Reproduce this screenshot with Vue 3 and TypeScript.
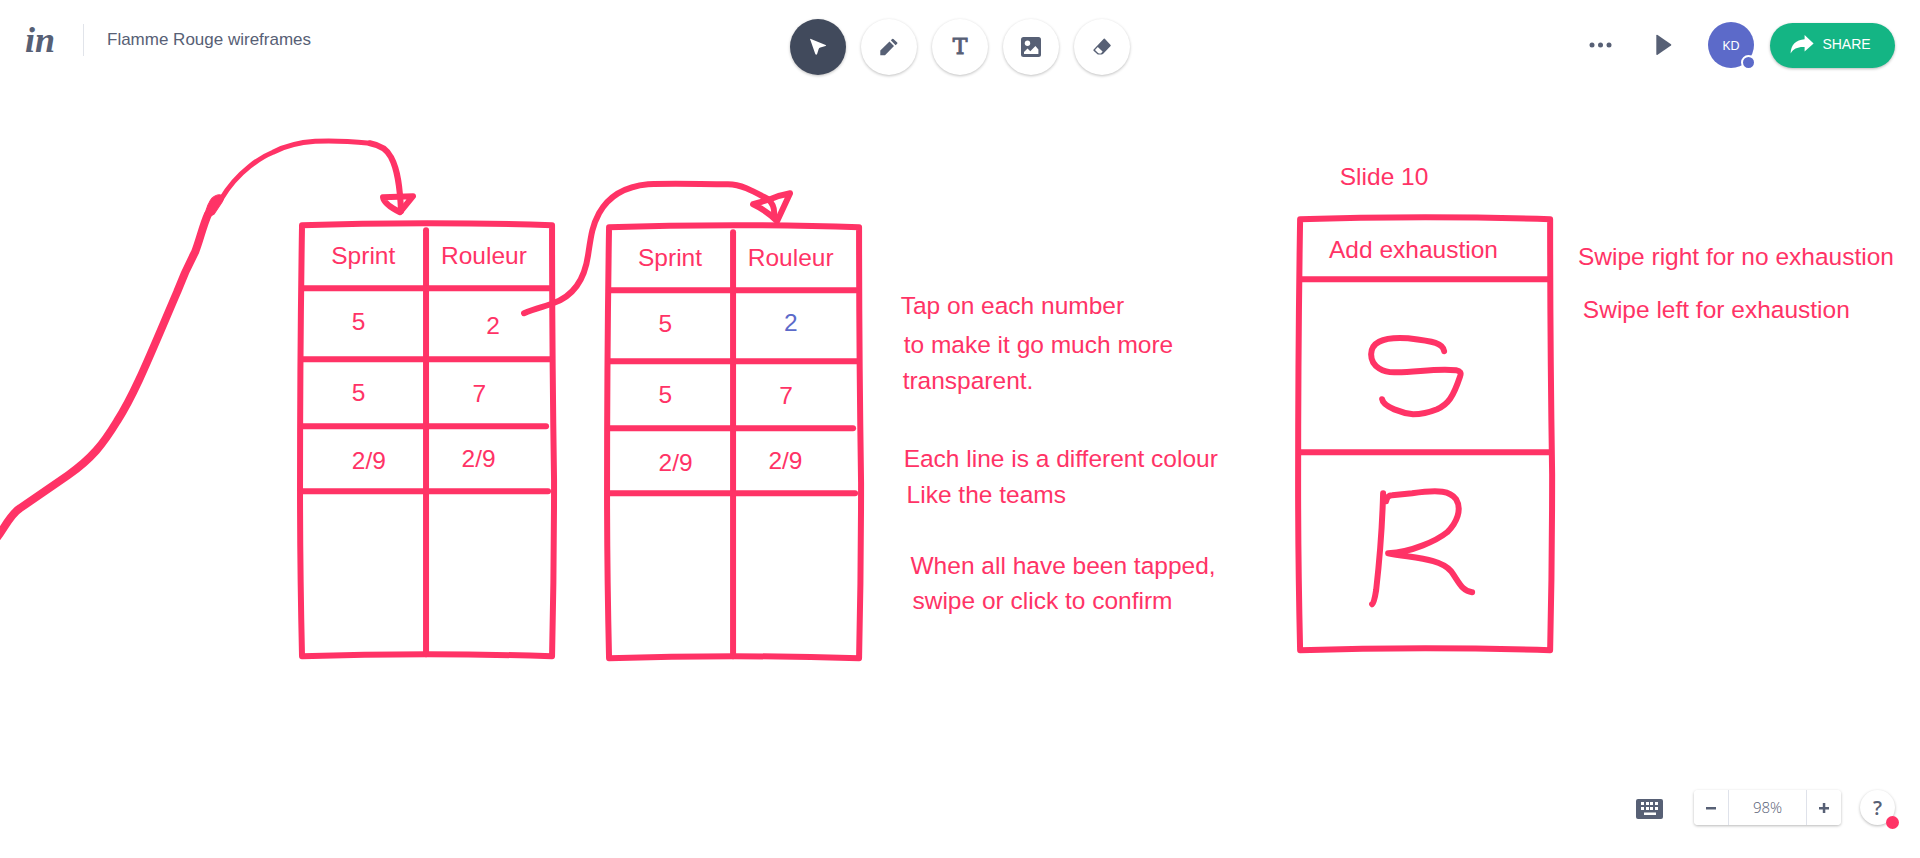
<script setup lang="ts">
import { ref } from 'vue'

interface Note {
  text: string
  x: number
  y: number
  accent?: boolean
}

interface Sketch {
  id: string
  ink: string
  dx: number
  dy: number
  lines: string[]
}

type Tool = 'select' | 'draw' | 'text' | 'image' | 'erase'

const documentName = 'Flamme Rouge wireframes'
const activeTool = ref<Tool>('select')
const zoom = ref(98)

const tools: { id: Tool; label: string }[] = [
  { id: 'select', label: 'Select' },
  { id: 'draw', label: 'Draw' },
  { id: 'text', label: 'Text' },
  { id: 'image', label: 'Image' },
  { id: 'erase', label: 'Erase' },
]

const frame =
  'M302 225 Q360 223 427 223 T552 225 Q552 350 554 480 Q554 570 552 656 Q490 654 427 654 T302 656 Q300 570 300 490 Q300 350 302 225 Z'

const gridLines = ['M426 230 V654', 'M302 288 H549', 'M302 359 H550', 'M302 426 H546', 'M302 491 H548']

const sketches: Sketch[] = [
  { id: 'first', ink: frame, dx: 0, dy: 0, lines: gridLines },
  { id: 'second', ink: frame, dx: 307, dy: 2, lines: gridLines },
  { id: 'slide', ink: frame, dx: 998, dy: -6, lines: ['M303 285 H551', 'M302 458 H551'] },
]

const cells = (dx: number, dy: number, tapped: boolean): Note[] => [
  { text: 'Sprint', x: 338 + dx, y: 269 + dy },
  { text: 'Rouleur', x: 450 + dx, y: 269 + dy },
  { text: '5', x: 359 + dx, y: 337 + dy },
  tapped ? { text: '2', x: 487 + dx, y: 336 + dy, accent: true } : { text: '2', x: 496 + dx, y: 341 + dy },
  { text: '5', x: 359 + dx, y: 409 + dy },
  { text: '7', x: 482 + dx, y: 410 + dy },
  { text: '2/9', x: 359 + dx, y: 478 + dy },
  { text: '2/9', x: 471 + dx, y: 476 + dy },
]

const notes: Note[] = [
  ...cells(0, 0, false),
  ...cells(313, 2, true),
  { text: 'Tap on each number', x: 919, y: 320 },
  { text: 'to make it go much more', x: 922, y: 360 },
  { text: 'transparent.', x: 921, y: 397 },
  { text: 'Each line is a different colour', x: 922, y: 476 },
  { text: 'Like the teams', x: 925, y: 513 },
  { text: 'When all have been tapped,', x: 929, y: 585 },
  { text: 'swipe or click to confirm', x: 931, y: 621 },
  { text: 'Slide 10', x: 1367, y: 189 },
  { text: 'Add exhaustion', x: 1356, y: 263 },
  { text: 'Swipe right for no exhaustion', x: 1610, y: 270 },
  { text: 'Swipe left for exhaustion', x: 1615, y: 324 },
]
</script>

<template>
  <div class="app">
    <svg class="canvas" viewBox="0 0 1959 875" role="img" aria-label="Whiteboard">
      <g class="ink" transform="scale(1.0204)">
        <path
          class="heavy"
          d="M-5 540 C4 529 10 514 20 508 L68 475 C92 458 103 444 117 421 C135 393 150 355 177 292 Q185 271 195 252 C200 239 203 225 208 214"
        />
        <path class="blob" d="M204 217 Q208 202 212 198 Q217 193 222 195 Q225 197 222 202 L214 214 Q209 218 204 217 Z" />
        <path class="light" d="M221 199 C238 170 263 156 273 152 C298 139 328 139 370 143" />
        <path d="M370 143 C381 145 387 149 391 157 C398 170 400 188 401 211" />
        <path d="M383 197 L413 196 L400 212 Q384 204 383 197 Z" />

        <path
          d="M524 313 C535 308 546 306 553 303 C576 295 585 276 588 255 C591 235 592 226 599 213 C609 195 627 186 648 184 C675 183 700 184 728 184 C742 184 755 192 768 199 Q775 205 774 215"
        />
        <path d="M753 204 L770 199 Q779 195 790 193 L777 221 Q766 210 753 204 Z" />

        <g v-for="s in sketches" :key="s.id" :transform="`translate(${s.dx} ${s.dy})`">
          <path :d="s.ink" />
          <path v-for="line in s.lines" :key="line" :d="line" />
        </g>

        <path
          d="M1444 351 C1443 343 1434 341 1408 338 C1380 336 1371 344 1371 354 C1371 367 1384 373 1397 372 C1417 372 1435 368 1456 370 Q1462 371 1460 376 C1453 397 1448 404 1437 409 C1427 413 1417 414 1413 414 C1403 413 1383 407 1382 399"
        />
        <path d="M1383 493 C1382 530 1380 555 1376 590 Q1374 603 1372 604" />
        <path
          d="M1386 501 Q1387 495 1392 495 L1412 493 C1440 489 1450 491 1456 499 C1462 509 1457 522 1447 532 C1437 540 1412 552 1388 553 C1414 558 1440 558 1451 571 C1459 582 1462 591 1472 592"
        />
      </g>
      <text
        v-for="(note, i) in notes"
        :key="i"
        :x="note.x"
        :y="note.y"
        :class="['note', { accent: note.accent }]"
      >{{ note.text }}</text>
    </svg>

    <header class="topbar">
      <div class="brand">
        <a class="logo" href="#" aria-label="Home">in</a>
        <h1 class="title">{{ documentName }}</h1>
      </div>

      <nav class="tools" aria-label="Tools">
        <button
          v-for="tool in tools"
          :key="tool.id"
          type="button"
          :class="['tool', { active: activeTool === tool.id }]"
          :aria-label="tool.label"
          :aria-pressed="activeTool === tool.id"
          @click="activeTool = tool.id"
        >
          <svg v-if="tool.id === 'select'" width="18" height="18" viewBox="0 0 18 18">
            <path d="M1.2 1.6 Q0.6 0.5 1.9 0.9 L16.6 6.9 Q17.8 7.6 16.5 8 L11.4 9.6 Q10 10 9.6 11.2 L8.2 15.8 Q7.2 17.6 6.2 15.8 Z" />
          </svg>
          <svg v-else-if="tool.id === 'draw'" width="18" height="18" viewBox="0 0 18 18">
            <path d="M0.3 12.4 L9.5 3.5 L14 8 L5 17.2 H0.3 Z M10.8 2.3 L12.2 0.9 Q12.8 0.4 13.4 0.9 L17.2 4.6 Q17.7 5.2 17.2 5.8 L15.6 7.2 Z" />
          </svg>
          <span v-else-if="tool.id === 'text'" class="tee">T</span>
          <svg v-else-if="tool.id === 'image'" width="20" height="20" viewBox="0 0 20 20">
            <rect width="20" height="20" rx="2.5" />
            <path class="cut" d="M3 17 V15 L6.5 11.6 L9.3 14.2 L14.4 9 L17.4 12.6 V17 Z" />
            <circle class="cut" cx="6.5" cy="6.3" r="2.7" />
          </svg>
          <svg v-else width="18" height="18" viewBox="0 0 18 18">
            <path d="M10.8 0.8 Q11.3 0.4 11.8 0.8 L17.6 6.9 Q18 7.4 17.6 7.9 L10.2 15.8 Q9.4 16.6 8.6 16.6 H5.6 Q4.8 16.6 4.2 16 L0.6 12.7 Q0 12 0.6 11.4 Z" />
            <path class="cut" d="M2 12 L4.8 9 L9.6 13.4 L8.4 14.9 Q8 15.4 7.2 15.4 H6.2 Q5.4 15.4 4.8 14.8 Z" />
          </svg>
        </button>
      </nav>

      <div class="actions">
        <button type="button" class="plain" aria-label="More">
          <svg width="24" height="24" viewBox="0 0 24 24">
            <circle cx="4" cy="12" r="2.5" />
            <circle cx="12.5" cy="12" r="2.5" />
            <circle cx="21" cy="12" r="2.5" />
          </svg>
        </button>
        <button type="button" class="plain play" aria-label="Play">
          <svg width="16" height="22" viewBox="0 0 16 22">
            <path d="M0.3 1.6 Q0.4 0.4 1.6 1 L15 10.2 Q15.8 10.9 15 11.6 L1.6 20.8 Q0.4 21.4 0.3 20.2 Z" />
          </svg>
        </button>
        <button type="button" class="avatar">KD<span class="presence"></span></button>
        <button type="button" class="share">
          <svg width="24" height="20" viewBox="0 0 24 20">
            <path d="M14.6 1 L23.6 9.4 L14.6 17.6 V13 C8 12.6 3.4 14.6 0.6 19.4 C0.8 11 6 5.6 14.6 5.2 Z" />
          </svg>
          SHARE
        </button>
      </div>
    </header>

    <footer class="bottombar">
      <button type="button" class="plain keys" aria-label="Keyboard shortcuts">
        <svg width="27" height="20" viewBox="0 0 27 20">
          <rect width="27" height="20" rx="2" />
          <path class="cut" d="M5 3h3v3h-3z M10 3h3v3h-3z M14 3h3v3h-3z M19 3h3v3h-3z M5 8h3v3h-3z M10 8h3v3h-3z M14 8h3v3h-3z M19 8h3v3h-3z M8 13.500h12v2.500h-12z" />
        </svg>
      </button>
      <div class="zoom">
        <button type="button" aria-label="Zoom out" @click="zoom -= 1">
          <svg width="10" height="10" viewBox="0 0 10 10"><path d="M0 4h10v2.500h-10z" /></svg>
        </button>
        <output class="level">{{ zoom }}%</output>
        <button type="button" aria-label="Zoom in" @click="zoom += 1">
          <svg width="10" height="10" viewBox="0 0 10 10"><path d="M0 4h3.800v-4h2.500v4h3.700v2.500h-3.700v3.500h-2.500v-3.500h-3.800z" /></svg>
        </button>
      </div>
      <button type="button" class="help" aria-label="Help">?<span class="alert"></span></button>
    </footer>
  </div>
</template>

<style>
body {
  margin: 0;
  background: #fff;
}
</style>

<style scoped>
.app {
  position: relative;
  display: flex;
  flex-direction: column;
  justify-content: space-between;
  min-height: 100vh;
  overflow: hidden;
  color: #576075;
  font-family: "Liberation Sans", Arial, sans-serif;
}

.canvas {
  position: absolute;
  inset: 0;
  width: 100%;
  height: 100%;
}

.ink {
  fill: none;
  stroke: #ff3366;
  stroke-width: 6;
  stroke-linecap: round;
  stroke-linejoin: round;
}

.ink .heavy {
  stroke-width: 8;
}

.ink .light {
  stroke-width: 5;
}

.ink .blob {
  fill: #ff3366;
  stroke-width: 1;
}

.note {
  fill: #ff3366;
  font-size: 25px;
}

.note.accent {
  fill: #5c6ac9;
}

.topbar {
  position: relative;
  display: grid;
  grid-template-columns: 1fr auto 1fr;
  align-items: start;
  padding: 19px 25px;
}

button {
  display: flex;
  align-items: center;
  justify-content: center;
  padding: 0;
  border: 0;
  background: #fff;
  color: inherit;
  font: inherit;
  cursor: pointer;
}

button svg {
  display: block;
  fill: currentColor;
}

button .cut {
  fill: #fff;
}

.brand {
  display: flex;
  align-items: center;
  height: 32px;
  padding-top: 5px;
}

.logo {
  width: 58px;
  color: #576075;
  font: italic bold 36px/30px "Liberation Serif", "Times New Roman", serif;
  text-decoration: none;
}

.title {
  margin: 0;
  padding-left: 23px;
  border-left: 1px solid #e1e4ea;
  font-size: 17px;
  font-weight: 400;
  line-height: 32px;
}

.tools {
  display: flex;
  gap: 15px;
}

.tool {
  width: 56px;
  height: 56px;
  border-radius: 50%;
  box-shadow: 0 1px 3px rgba(0, 0, 0, 0.25);
}

.tool.active {
  background: #414a5c;
  color: #fff;
}

.tee {
  font: 22px/24px "DejaVu Serif", serif;
  -webkit-text-stroke: 1px currentColor;
}

.actions {
  display: flex;
  align-items: center;
  justify-content: flex-end;
  padding-top: 3px;
}

.plain {
  background: transparent;
}

.play {
  margin: 0 36px 0 44px;
}

.avatar {
  position: relative;
  width: 46px;
  height: 46px;
  margin-right: 16px;
  border-radius: 50%;
  background: #5c6ac9;
  color: #fff;
  font: 13px/18px "Noto Sans", sans-serif;
}

.presence {
  position: absolute;
  right: -2px;
  bottom: -2px;
  width: 11px;
  height: 11px;
  border: 2px solid #fff;
  border-radius: 50%;
  background: #5c6ac9;
}

.share {
  gap: 8px;
  width: 125px;
  height: 45px;
  padding-right: 4px;
  padding-bottom: 2px;
  border-radius: 23px;
  background: #14b584;
  box-shadow: 0 1px 3px rgba(0, 0, 0, 0.28);
  color: #fff;
  font-size: 14px;
}

.bottombar {
  position: relative;
  display: flex;
  align-items: center;
  justify-content: flex-end;
  padding: 0 25px 33px;
}

.keys {
  margin: 3px 31px 0 0;
}

.zoom {
  display: flex;
  height: 35px;
  margin-right: 19px;
  border-radius: 4px;
  background: #fff;
  box-shadow: 0 1px 3px rgba(0, 0, 0, 0.28);
}

.zoom button {
  width: 34px;
  border-radius: 4px;
}

.level {
  width: 77px;
  border: solid #dfe2ea;
  border-width: 0 1px;
  font: 300 15px/35px "Open Sans", sans-serif;
  text-align: center;
}

.help {
  position: relative;
  width: 35px;
  height: 35px;
  border-radius: 50%;
  box-shadow: 0 1px 3px rgba(0, 0, 0, 0.28);
  font: 600 20px/24px "Open Sans", sans-serif;
}

.alert {
  position: absolute;
  right: -4px;
  bottom: -4px;
  width: 13px;
  height: 13px;
  border-radius: 50%;
  background: #ff3366;
}
</style>
